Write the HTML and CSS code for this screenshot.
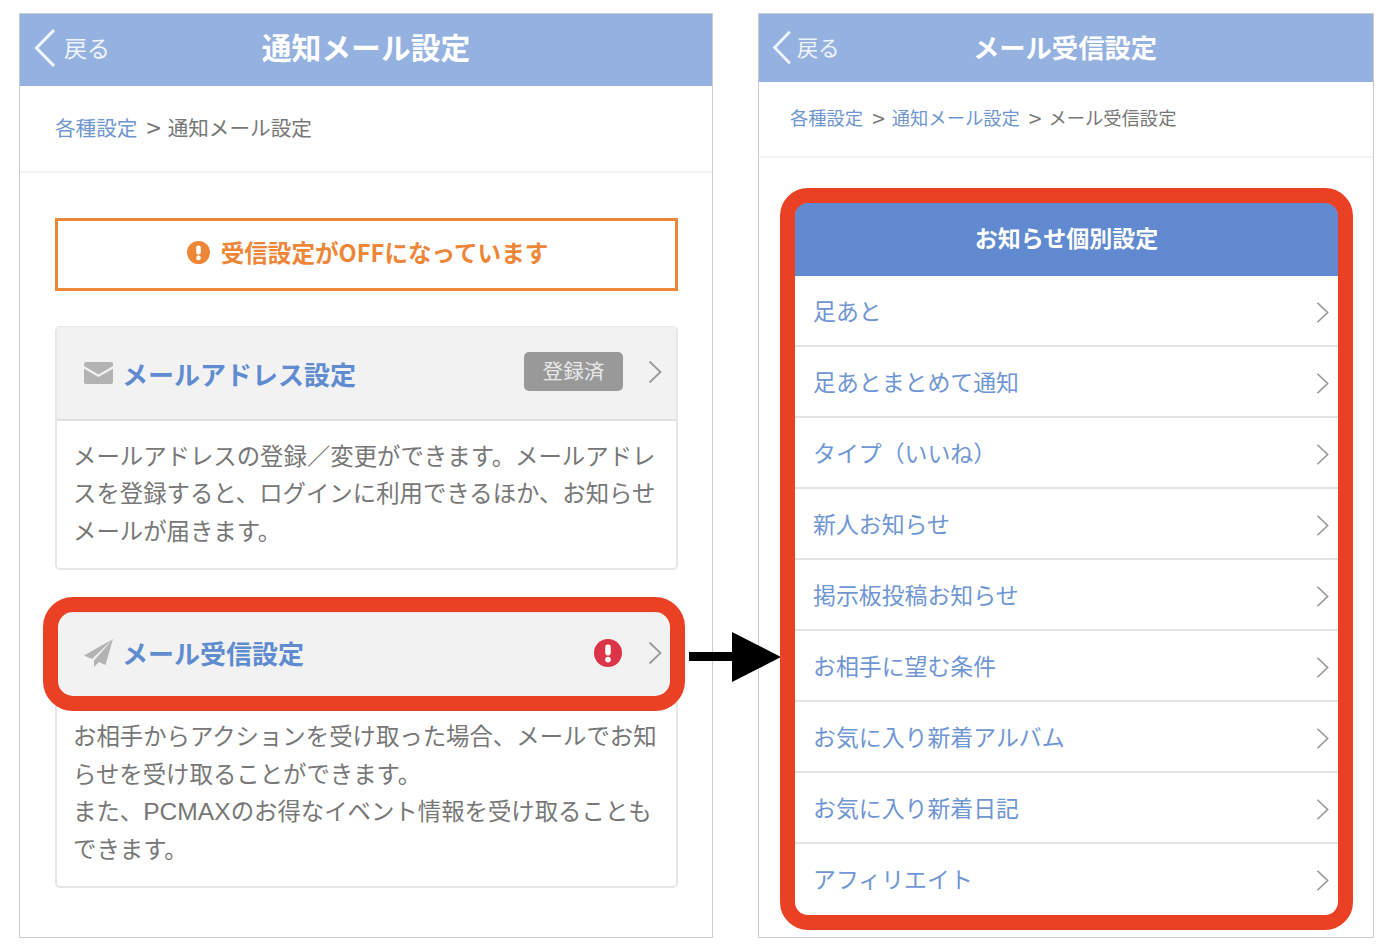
FILE: index.html
```html
<!DOCTYPE html>
<html lang="ja">
<head>
<meta charset="utf-8">
<title>通知メール設定</title>
<link rel="stylesheet" href="styles.css">
</head>
<body>
<svg class="defs" width="0" height="0" aria-hidden="true">
  <symbol id="chev" viewBox="0 0 14 24"><path d="M1.5 1.5 12.5 12 1.5 22.5" fill="none" stroke="currentColor" stroke-width="1.8"/></symbol>
  <symbol id="back" viewBox="0 0 22 40"><path d="M20 2 2.5 20 20 38" fill="none" stroke="currentColor" stroke-width="3.2"/></symbol>
  <symbol id="alert" viewBox="0 0 28 28"><circle cx="14" cy="14" r="14" fill="currentColor"/><rect x="11.2" y="5.5" width="5.6" height="11" rx="2.4" fill="#fff"/><circle cx="14" cy="20.6" r="2.8" fill="#fff"/></symbol>
</svg>
<main class="stage">
  <section class="phone phone-left">
    <header class="top top-left">
      <a class="back back-left"><svg class="back-icon-l"><use href="#back"/></svg>戻る</a>
      <h1 class="title title-left">通知メール設定</h1>
    </header>
    <nav class="crumb crumb-left"><a>各種設定</a><span class="sep">&gt;</span>通知メール設定</nav>
    <div class="content">
      <p class="notice"><svg class="notice-icon"><use href="#alert"/></svg>受信設定がOFFになっています</p>
      <article class="card">
        <div class="card-head">
          <svg class="mail" viewBox="0 0 29 22"><path d="M2 0h25a2 2 0 0 1 2 2v2L14.5 12.5 0 4V2a2 2 0 0 1 2-2Z" fill="#b3b3b3"/><path d="M0 6.8 14.5 15 29 6.8V20a2 2 0 0 1-2 2H2a2 2 0 0 1-2-2Z" fill="#b3b3b3"/></svg>
          <h2 class="card-title">メールアドレス設定</h2>
          <span class="badge">登録済</span>
          <svg class="chev-card"><use href="#chev"/></svg>
        </div>
        <p class="desc">メールアドレスの登録／変更ができます。メールアドレ<br>スを登録すると、ログインに利用できるほか、お知らせ<br>メールが届きます。</p>
      </article>
      <article class="card card-second">
        <div class="card-head card-head-second">
          <svg class="plane" viewBox="0 0 29 28"><path d="M29 0 0 16.5l8 3.6L29 0ZM29 0 10 21.5V28l5-5 6.5 3L29 0Z" fill="#b3b3b3"/></svg>
          <h2 class="card-title">メール受信設定</h2>
          <svg class="alert-red"><use href="#alert"/></svg>
          <svg class="chev-card chev-second"><use href="#chev"/></svg>
        </div>
        <p class="desc desc-second">お相手からアクションを受け取った場合、メールでお知<br>らせを受け取ることができます。<br>また、<span class="latin">PCMAX</span>のお得なイベント情報を受け取ることも<br>できます。</p>
        <div class="mark mark-left"></div>
      </article>
    </div>
  </section>

  <svg class="arrow" viewBox="0 0 92 50"><path d="M0 20h43V0l49 25-49 25V29H0Z" fill="#000"/></svg>

  <section class="phone phone-right">
    <header class="top top-right">
      <a class="back back-right"><svg class="back-icon-r"><use href="#back"/></svg>戻る</a>
      <h1 class="title title-right">メール受信設定</h1>
    </header>
    <nav class="crumb crumb-right"><a>各種設定</a><span class="sep">&gt;</span><a>通知メール設定</a><span class="sep">&gt;</span>メール受信設定</nav>
    <div class="panel">
      <h2 class="panel-head">お知らせ個別設定</h2>
      <ul class="rows">
        <li class="row">足あと<svg class="chev-row"><use href="#chev"/></svg></li>
        <li class="row">足あとまとめて通知<svg class="chev-row"><use href="#chev"/></svg></li>
        <li class="row">タイプ（いいね）<svg class="chev-row"><use href="#chev"/></svg></li>
        <li class="row">新人お知らせ<svg class="chev-row"><use href="#chev"/></svg></li>
        <li class="row">掲示板投稿お知らせ<svg class="chev-row"><use href="#chev"/></svg></li>
        <li class="row">お相手に望む条件<svg class="chev-row"><use href="#chev"/></svg></li>
        <li class="row">お気に入り新着アルバム<svg class="chev-row"><use href="#chev"/></svg></li>
        <li class="row">お気に入り新着日記<svg class="chev-row"><use href="#chev"/></svg></li>
        <li class="row">アフィリエイト<svg class="chev-row"><use href="#chev"/></svg></li>
      </ul>
      <div class="mark mark-right"></div>
    </div>
  </section>
</main>
</body>
</html>
```

FILE: styles.css
```css
* { box-sizing: border-box; }
html, body { margin: 0; padding: 0; background: #fff; }
body {
  font-family: "Noto Sans CJK JP", "Noto Sans", sans-serif;
  color: #777;
  width: 1398px;
  height: 952px;
  overflow: hidden;
}
.defs { position: absolute; }
h1, h2, p, ul { margin: 0; padding: 0; }
ul { list-style: none; }

.stage {
  position: relative;
  display: flex;
  gap: 45px;
  padding: 13px 0 0 19px;
}
.phone {
  height: 925px;
  border: 1px solid #ccc;
  flex: none;
}
.phone-left { width: 694px; }
.phone-right { width: 616px; }

.top {
  display: flex;
  align-items: center;
  position: relative;
  background: #94b1df;
  color: #fff;
}
.top-left { height: 72px; padding-bottom: 8px; }
.top-right { height: 68px; padding-bottom: 3px; }
.back {
  display: flex;
  align-items: center;
  position: absolute;
  left: 0;
  top: 0;
  bottom: 0;
  color: #f0f4fb;
}
.back-left { padding-left: 14px; padding-bottom: 7px; font-size: 23px; }
.back-right { padding-left: 13px; padding-bottom: 4px; font-size: 21.2px; }
.back-icon-l { width: 22px; height: 40px; margin-right: 8px; margin-top: 2px; }
.back-icon-r { width: 20px; height: 35px; margin-right: 5px; margin-top: 3px; }
.title {
  flex: 1;
  text-align: center;
  font-weight: 700;
  color: #fff;
  white-space: nowrap;
}
.title-left { font-size: 29.8px; }
.title-right { font-size: 26.3px; padding-right: 2px; }

.crumb {
  display: flex;
  align-items: center;
  border-bottom: 2px solid #f3f3f3;
  white-space: nowrap;
  color: #777;
}
.crumb a { color: #6f96d0; }
.crumb-left { height: 87px; padding-left: 35px; font-size: 20.6px; padding-bottom: 3px; }
.crumb-right { height: 76px; padding-left: 31px; font-size: 18.3px; padding-bottom: 4px; }
.sep { font-size: 1.25em; line-height: 1; margin: 0 7px 0 9px; }

.content { padding: 45px 34px 0 35px; }
.notice {
  display: flex;
  align-items: center;
  justify-content: center;
  height: 73px;
  padding: 0 0 5px 2px;
  border: 3px solid #ee8638;
  color: #ee8638;
  font-size: 23.6px;
  font-weight: 700;
  white-space: nowrap;
}
.notice-icon { width: 23px; height: 23px; margin-right: 11px; }

.card {
  position: relative;
  margin-top: 35px;
  border: 2px solid #e6e6e6;
  border-top-width: 1px;
  border-radius: 5px;
  background: #fff;
}
.card-second { margin-top: 42px; }
.card-head {
  display: flex;
  align-items: center;
  height: 94px;
  padding: 0 14px 0 27px;
  background: #f2f2f2;
  border-bottom: 2px solid #e0e0e0;
}
.card-head-second { height: 92px; padding-bottom: 11px; }
.mail { width: 29px; height: 22px; margin-right: 9px; flex: none; }
.plane { width: 29px; height: 28px; margin-right: 9px; flex: none; }
.card-title {
  flex: 1;
  font-size: 26px;
  font-weight: 700;
  color: #5f8bd0;
  white-space: nowrap;
}
.badge {
  width: 99px;
  height: 39px;
  line-height: 37px;
  margin-right: 25px;
  margin-top: -4px;
  border-radius: 5px;
  background: #999;
  color: #e8e8e8;
  text-align: center;
  font-size: 20.6px;
}
.chev-card { width: 14px; height: 24px; color: #999; margin-top: -2px; flex: none; }
.chev-second { margin-top: 0; }
.alert-red { width: 28px; height: 28px; color: #dd3347; margin-right: 26px; flex: none; }
.desc {
  padding: 16px 16px 19px;
  font-size: 23.4px;
  line-height: 37.4px;
  color: #777;
  white-space: nowrap;
}
.desc-second { padding-top: 12px; padding-bottom: 18px; }
.latin { font-family: "Liberation Sans", sans-serif; font-size: 24.6px; }

.panel {
  position: relative;
  margin: 45px 35px 0 36px;
}
.panel-head {
  height: 73px;
  line-height: 69px;
  border-radius: 12px 12px 0 0;
  background: #6089cf;
  color: #fff;
  text-align: center;
  font-size: 23px;
  font-weight: 700;
}
.row {
  display: flex;
  align-items: center;
  justify-content: space-between;
  height: 71px;
  padding: 0 9px 1px 18px;
  border-bottom: 2px solid #e4e4e4;
  color: #6f96d4;
  font-size: 22.9px;
  white-space: nowrap;
}
.row:last-child { border-bottom: 0; padding-bottom: 3px; }
.chev-row { width: 13px; height: 23px; color: #999; margin-top: 4px; }

.mark {
  position: absolute;
  border: 15px solid #ea4125;
  pointer-events: none;
}
.mark-left {
  left: -14px;
  right: -9px;
  top: -16px;
  height: 114px;
  border-radius: 30px;
}
.mark-right {
  left: -15px;
  right: -15px;
  top: -15px;
  bottom: -15px;
  border-radius: 28px;
}
.arrow {
  position: absolute;
  left: 689px;
  top: 632px;
  width: 92px;
  height: 50px;
}
```
